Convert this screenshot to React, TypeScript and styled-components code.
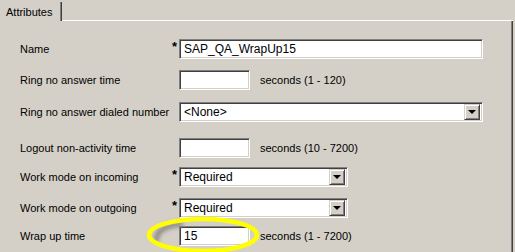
import React from 'react';
import styled, { createGlobalStyle } from 'styled-components';

const GlobalStyle = createGlobalStyle`
  html, body {
    margin: 0;
    padding: 0;
    background: #d4d0c8;
  }
  body {
    font-family: "Liberation Sans", Arial, sans-serif;
    font-size: 11px;
    color: #000;
  }
`;

const Page = styled.div`
  position: relative;
  width: 515px;
  height: 252px;
  overflow: hidden;
  background: #d4d0c8;
  display: flex;
  flex-direction: column;
`;

const TabStrip = styled.div`
  display: flex;
  height: 21px;
`;

const Tab = styled.div`
  box-sizing: border-box;
  width: 62px;
  margin-top: 2px;
  padding: 4px 0 0 6px;
  border-right: 1px solid #404040;
  box-shadow: inset -1px 0 0 #808080;
`;

const TabRest = styled.div`
  flex: 1;
  border-bottom: 1px solid #ffffff;
  margin-right: 2px;
`;

const Panel = styled.div`
  flex: 1;
  margin-right: 2px;
  border-right: 1px solid #404040;
  box-shadow: inset -1px 0 0 #808080;
  padding: 18px 0 0 20px;
`;

const Row = styled.div<{ $gap: number }>`
  display: grid;
  grid-template-columns: 152px 7px auto;
  align-items: center;
  margin-top: ${(p) => p.$gap}px;
  height: 20px;
`;

const Label = styled.span`
  white-space: nowrap;
`;

const Star = styled.span`
  font-size: 13px;
  font-weight: bold;
  line-height: 1;
  align-self: start;
  margin-top: 1px;
`;

const Field = styled.div`
  display: flex;
  align-items: center;
`;

const sunken = `
  box-sizing: border-box;
  height: 20px;
  background: #ffffff;
  border-top: 1px solid #808080;
  border-left: 1px solid #808080;
  border-right: 1px solid #ffffff;
  border-bottom: 1px solid #ffffff;
  box-shadow: inset 1px 1px 0 #404040, inset -1px -1px 0 #d4d0c8;
`;

const TextBox = styled.div<{ $width: number }>`
  ${sunken}
  width: ${(p) => p.$width}px;
  padding: 2px 0 0 4px;
  font-size: 12px;
`;

const Select = styled.div<{ $width: number }>`
  ${sunken}
  width: ${(p) => p.$width}px;
  display: flex;
  align-items: center;
  padding: 2px 2px 2px 4px;
  font-size: 12px;
`;

const SelectText = styled.span`
  flex: 1;
`;

const DropButton = styled.div`
  box-sizing: border-box;
  width: 16px;
  height: 16px;
  background: #d4d0c8;
  border-top: 1px solid #d4d0c8;
  border-left: 1px solid #d4d0c8;
  border-right: 1px solid #404040;
  border-bottom: 1px solid #404040;
  box-shadow: inset 1px 1px 0 #ffffff, inset -1px -1px 0 #808080;
  display: flex;
  align-items: center;
  justify-content: center;
`;

const Arrow = styled.span`
  width: 0;
  height: 0;
  border-left: 4px solid transparent;
  border-right: 4px solid transparent;
  border-top: 4px solid #000;
`;

const Hint = styled.span`
  margin-left: 10px;
  white-space: nowrap;
`;

const Highlight = styled.svg`
  position: absolute;
  left: 145px;
  top: 215px;
`;

type FieldRow = {
  label: string;
  gap: number;
  required?: boolean;
  kind: 'text' | 'select';
  value?: string;
  width: number;
  hint?: string;
};

const rows: FieldRow[] = [
  { label: 'Name', gap: 0, required: true, kind: 'text', value: 'SAP_QA_WrapUp15', width: 304 },
  { label: 'Ring no answer time', gap: 11, kind: 'text', width: 71, hint: 'seconds (1 - 120)' },
  { label: 'Ring no answer dialed number', gap: 12, kind: 'select', value: '<None>', width: 304 },
  { label: 'Logout non-activity time', gap: 16, kind: 'text', width: 71, hint: 'seconds (10 - 7200)' },
  { label: 'Work mode on incoming', gap: 9, required: true, kind: 'select', value: 'Required', width: 169 },
  { label: 'Work mode on outgoing', gap: 11, required: true, kind: 'select', value: 'Required', width: 169 },
  { label: 'Wrap up time', gap: 8, kind: 'text', value: '15', width: 71, hint: 'seconds (1 - 7200)' },
];

export default function App() {
  return (
    <Page>
      <GlobalStyle />
      <TabStrip>
        <Tab>Attributes</Tab>
        <TabRest />
      </TabStrip>
      <Panel>
        {rows.map((r) => (
          <Row key={r.label} $gap={r.gap}>
            <Label>{r.label}</Label>
            <Star>{r.required ? '*' : ''}</Star>
            <Field>
              {r.kind === 'text' ? (
                <TextBox $width={r.width}>{r.value}</TextBox>
              ) : (
                <Select $width={r.width}>
                  <SelectText>{r.value}</SelectText>
                  <DropButton>
                    <Arrow />
                  </DropButton>
                </Select>
              )}
              {r.hint && <Hint>{r.hint}</Hint>}
            </Field>
          </Row>
        ))}
      </Panel>
      <Highlight width="120" height="40" viewBox="0 0 120 40">
        <defs>
          <filter id="soft" x="-10%" y="-20%" width="120%" height="140%">
            <feGaussianBlur stdDeviation="0.5" />
          </filter>
          <filter id="shade" x="-20%" y="-40%" width="140%" height="180%">
            <feGaussianBlur stdDeviation="2" />
          </filter>
        </defs>
        <path d="M12 27 C9 17 20 10 38 9" stroke="#8a8780" strokeWidth="5" fill="none" filter="url(#shade)" />
        <ellipse cx="58" cy="20" rx="54" ry="16" stroke="#ffff00" strokeWidth="4.5" fill="none" filter="url(#soft)" />
      </Highlight>
    </Page>
  );
}
